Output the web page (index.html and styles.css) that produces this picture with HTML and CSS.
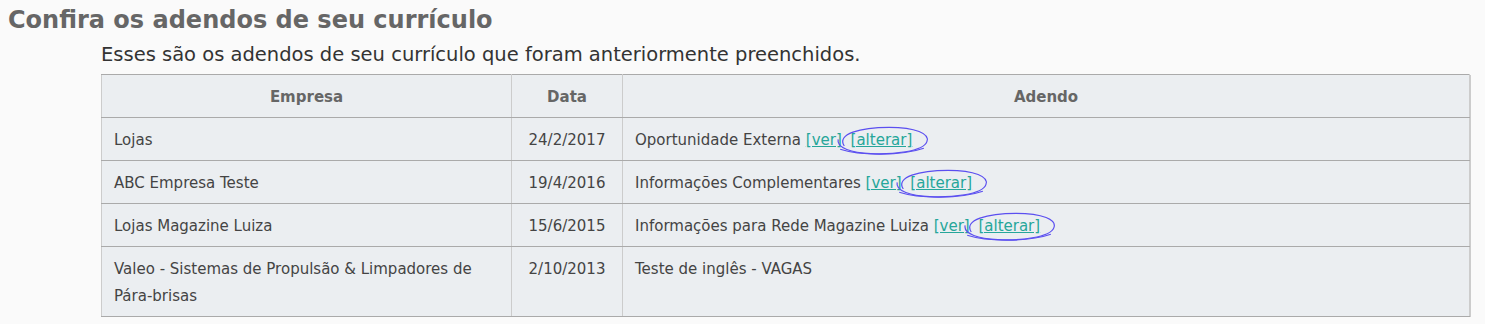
FILE: index.html
```html
<!DOCTYPE html>
<html lang="pt-BR">
<head>
<meta charset="utf-8">
<title>Adendos</title>
<link rel="stylesheet" href="styles.css">
</head>
<body>
<h2 class="title">Confira os adendos de seu currículo</h2>
<div class="content">
  <p class="intro">Esses são os adendos de seu currículo que foram anteriormente preenchidos.</p>
  <table class="adendos">
    <thead>
      <tr><th class="c-emp">Empresa</th><th class="c-data">Data</th><th class="c-ad">Adendo</th></tr>
    </thead>
    <tbody>
      <tr><td>Lojas</td><td class="num">24/2/2017</td><td>Oportunidade Externa <a href="#">[ver]</a> <span class="mark"><a href="#">[alterar]</a><svg class="circle" viewBox="0 0 100 30" preserveAspectRatio="none"><path d="M14 20 C 6 9, 30 3, 58 3 C 84 3, 98 9, 95 16 C 92 25, 60 28, 40 27 C 22 26, 6 22, 8 14"/><path d="M10 23 C 30 29, 70 29, 92 22"/></svg></span></td></tr>
      <tr><td>ABC Empresa Teste</td><td class="num">19/4/2016</td><td>Informações Complementares <a href="#">[ver]</a> <span class="mark"><a href="#">[alterar]</a><svg class="circle" viewBox="0 0 100 30" preserveAspectRatio="none"><path d="M14 20 C 6 9, 30 3, 58 3 C 84 3, 98 9, 95 16 C 92 25, 60 28, 40 27 C 22 26, 6 22, 8 14"/><path d="M10 23 C 30 29, 70 29, 92 22"/></svg></span></td></tr>
      <tr><td>Lojas Magazine Luiza</td><td class="num">15/6/2015</td><td>Informações para Rede Magazine Luiza <a href="#">[ver]</a> <span class="mark"><a href="#">[alterar]</a><svg class="circle" viewBox="0 0 100 30" preserveAspectRatio="none"><path d="M14 20 C 6 9, 30 3, 58 3 C 84 3, 98 9, 95 16 C 92 25, 60 28, 40 27 C 22 26, 6 22, 8 14"/><path d="M10 23 C 30 29, 70 29, 92 22"/></svg></span></td></tr>
      <tr><td>Valeo - Sistemas de Propulsão &amp; Limpadores de<br>Pára-brisas</td><td class="num">2/10/2013</td><td>Teste de inglês - VAGAS</td></tr>
    </tbody>
  </table>
</div>
</body>
</html>
```
FILE: styles.css
```css
html, body {
  margin: 0;
  padding: 0;
  background: #fafafa;
}
body {
  font-family: Tahoma, "DejaVu Sans", Verdana, sans-serif;
  color: #333;
  padding: 0 8px;
}
.title {
  margin: 0;
  padding-top: 6px;
  font-size: 24px;
  line-height: 28px;
  font-weight: bold;
  color: #666;
}
.content {
  padding-left: 93px;
  padding-right: 7px;
}
.intro {
  margin: 9px 0 7px;
  font-size: 19.5px;
  line-height: 24px;
  color: #333;
}
.adendos {
  width: 100%;
  border-collapse: collapse;
  background: #ebeef1;
  font-size: 15px;
  color: #444;
  border: 1px solid #aaa;
  border-left-color: #ccc;
  box-shadow: 1px 1px 0 #ccc;
}
.adendos th, .adendos td {
  border-top: 1px solid #aaa;
  border-bottom: 1px solid #aaa;
  border-left: 1px solid #ccc;
  border-right: 1px solid #ccc;
  padding: 9px 12px 6px;
  line-height: 27px;
  vertical-align: top;
  text-align: left;
}
.adendos th {
  text-align: center;
  color: #666;
  font-weight: bold;
}
.c-emp { width: 385px; }
.c-data { width: 86px; }
.adendos td.num { text-align: center; }
.adendos a {
  color: #26a69a;
  text-decoration: underline;
}
.mark {
  position: relative;
  margin-left: 4px;
}
.circle {
  position: absolute;
  left: -21px;
  top: -7px;
  width: 102px;
  height: 33px;
  fill: none;
  stroke: #5b4ff0;
  stroke-width: 1.2;
  overflow: visible;
  pointer-events: none;
}
.circle path {
  vector-effect: non-scaling-stroke;
}
```
